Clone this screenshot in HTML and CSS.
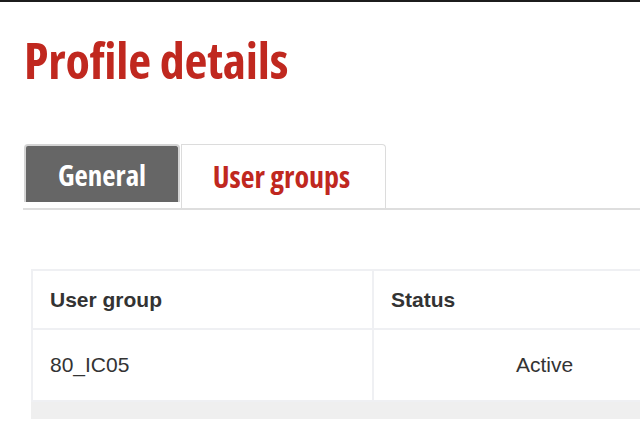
FILE: index.html
```html
<!DOCTYPE html>
<html>
  <head>
    <title>Profile details</title>
    <link rel="stylesheet" href="styles.css">
  </head>
  <body>
    <div class="topbar"></div>
    <div class="page">
      <h1 class="title">Profile details</h1>

      <div class="tabs">
        <div class="tab tab-active">General</div>
        <div class="tab">User groups</div>
      </div>

      <div class="table-wrap">
        <table class="groups">
          <thead>
            <tr>
              <th class="col-group">User group</th>
              <th class="col-status">Status</th>
            </tr>
          </thead>
          <tbody>
            <tr>
              <td>80_IC05</td>
              <td class="status">Active</td>
            </tr>
          </tbody>
        </table>
        <div class="table-foot"></div>
      </div>
    </div>
  </body>
</html>
```

FILE: styles.css
```css
html, body {
  margin: 0;
  padding: 0;
  background-color: #fff;
  overflow: hidden;
}
body {
  font-family: "Liberation Sans", Arial, sans-serif;
  color: #333;
}
.topbar {
  height: 2px;
  background-color: #1c1c1c;
}
.page {
  padding: 0 0 0 23px;
}
.title {
  margin: 30px 0 0 1px;
  font-family: "Open Sans", sans-serif;
  font-stretch: 75%;
  font-weight: 700;
  font-size: 50px;
  line-height: 56px;
  color: #c0281f;
  letter-spacing: -0.2px;
}
.tabs {
  display: flex;
  align-items: flex-end;
  margin-top: 56px;
  border-bottom: 2px solid #dedede;
  width: 700px;
}
.tab {
  font-family: "Open Sans", sans-serif;
  font-stretch: 75%;
  font-weight: 700;
  font-size: 30px;
  box-sizing: border-box;
  height: 64px;
  padding: 11px 4px 0 0;
  text-align: center;
  color: #c0281f;
  background-color: #fff;
  border: 1px solid #dcdcdc;
  border-bottom: none;
  border-radius: 0 4px 0 0;
  width: 205px;
  margin-left: 1px;
}
.tab-active {
  width: 156px;
  height: 58px;
  margin: 0 0 6px 1px;
  padding: 9px 0 0 0;
  color: #fff;
  background-color: #666;
  border: 2px solid #d4d4d4;
  border-bottom: none;
  border-radius: 4px 4px 0 0;
  font-size: 29px;
}
.table-wrap {
  margin: 59px 0 0 8px;
  width: 686px;
}
.groups {
  width: 100%;
  border-collapse: collapse;
  font-size: 21px;
}
.groups th,
.groups td {
  border: 2px solid #eff0f3;
  padding: 0 17px;
  text-align: left;
}
.groups th {
  height: 57px;
  font-weight: 700;
  color: #333;
}
.groups td {
  height: 70px;
  color: #333;
}
.col-group {
  width: 305px;
}
.groups td.status {
  text-align: center;
}
.table-foot {
  height: 17px;
  background-color: #efefef;
}
```
